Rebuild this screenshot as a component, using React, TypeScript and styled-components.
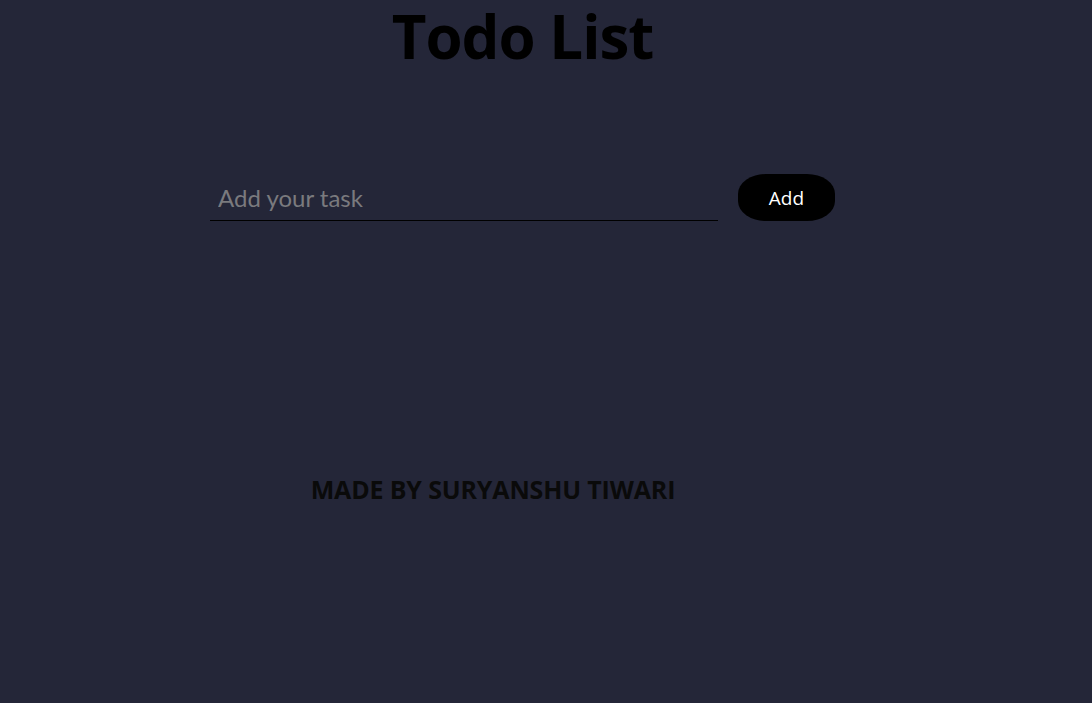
import React from "react";
import styled, { createGlobalStyle } from "styled-components";

const Global = createGlobalStyle`
  html, body { margin: 0; padding: 0; background: #242638; }
  body { font-family: "Open Sans", "Noto Sans", sans-serif; }
  * { box-sizing: border-box; }
`;

const Page = styled.div`
  width: 1045px;
  height: 703px;
  display: flex;
  flex-direction: column;
  align-items: center;
`;

const Title = styled.h1`
  margin: 0;
  padding-top: 2px;
  font-family: "Open Sans", sans-serif;
  font-weight: 700;
  font-size: 60px;
  line-height: 68px;
  letter-spacing: -1px;
  color: #000;
`;

const Form = styled.form`
  margin-top: 104px;
  display: flex;
  align-items: flex-end;
  gap: 20px;
`;

const Input = styled.input`
  width: 508px;
  height: 46px;
  background: transparent;
  border: none;
  border-bottom: 1px solid #000;
  outline: none;
  padding: 0 8px;
  font-family: "Lato", sans-serif;
  font-size: 24px;
  color: #ddd;
  &::placeholder { color: #7a7a7e; }
`;

const Button = styled.button`
  width: 97px;
  height: 47px;
  border: none;
  border-radius: 28px / 20px;
  background: #000;
  color: #fff;
  font-family: "Open Sans", sans-serif;
  font-size: 19px;
  padding: 0;
  cursor: pointer;
`;

const Footer = styled.footer`
  align-self: flex-start;
  width: 986px;
  margin-top: 253px;
  display: flex;
  justify-content: center;
`;

const Credit = styled.p`
  margin: 0;
  font-family: "Open Sans", sans-serif;
  font-weight: 700;
  font-size: 25px;
  line-height: 30px;
  letter-spacing: -0.15px;
  color: #0a0a0a;
`;

export default function App() {
  return (
    <>
      <Global />
      <Page>
        <Title>Todo List</Title>
        <Form onSubmit={(e) => e.preventDefault()}>
          <Input placeholder="Add your task" />
          <Button type="submit">Add</Button>
        </Form>
        <Footer>
          <Credit>MADE BY SURYANSHU TIWARI</Credit>
        </Footer>
      </Page>
    </>
  );
}
